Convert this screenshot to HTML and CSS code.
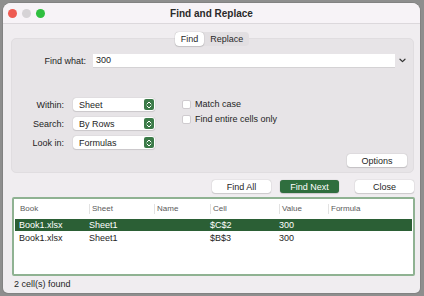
FILE: index.html
```html
<!DOCTYPE html>
<html lang="en">
<head>
    <meta charset="UTF-8">
    <meta name="viewport" content="width=device-width, initial-scale=1.0">
    <title>Find and Replace</title>
    <link rel="stylesheet" href="styles.css">
</head>
<body>
  <div class="window">
    <div class="titlebar">
      <div class="lights">
        <span class="light red"></span>
        <span class="light gray"></span>
        <span class="light green"></span>
      </div>
      <div class="title">Find and Replace</div>
      <div></div>
    </div>

    <div class="content">
      <div class="tabs">
        <div class="tab active">Find</div>
        <div class="tab">Replace</div>
      </div>

      <div class="panel">
        <div class="find-row">
          <label class="find-label">Find what:</label>
          <div class="find-input">300</div>
          <svg class="chevron" width="7" height="5" viewBox="0 0 7 5">
            <path d="M1 1.2 L3.5 3.6 L6 1.2" fill="none" stroke="#333" stroke-width="1.2" stroke-linecap="round" stroke-linejoin="round"/>
          </svg>
        </div>

        <div class="options">
          <div class="selects">
            <div class="opt-row">
              <label class="opt-label">Within:</label>
              <div class="select"><span>Sheet</span><span class="stepper"><svg width="6" height="8" viewBox="0 0 6 8"><path d="M1 3 L3 1 L5 3 M1 5 L3 7 L5 5" fill="none" stroke="#fff" stroke-width="1" stroke-linecap="round" stroke-linejoin="round"/></svg></span></div>
            </div>
            <div class="opt-row">
              <label class="opt-label">Search:</label>
              <div class="select"><span>By Rows</span><span class="stepper"><svg width="6" height="8" viewBox="0 0 6 8"><path d="M1 3 L3 1 L5 3 M1 5 L3 7 L5 5" fill="none" stroke="#fff" stroke-width="1" stroke-linecap="round" stroke-linejoin="round"/></svg></span></div>
            </div>
            <div class="opt-row">
              <label class="opt-label">Look in:</label>
              <div class="select"><span>Formulas</span><span class="stepper"><svg width="6" height="8" viewBox="0 0 6 8"><path d="M1 3 L3 1 L5 3 M1 5 L3 7 L5 5" fill="none" stroke="#fff" stroke-width="1" stroke-linecap="round" stroke-linejoin="round"/></svg></span></div>
            </div>
          </div>
          <div class="checks">
            <div class="check-row"><span class="checkbox"></span>Match case</div>
            <div class="check-row"><span class="checkbox"></span>Find entire cells only</div>
          </div>
        </div>

        <div class="panel-foot">
          <button class="btn">Options</button>
        </div>
      </div>

      <div class="actions">
        <button class="btn wide">Find All</button>
        <button class="btn wide primary">Find Next</button>
        <button class="btn wide close">Close</button>
      </div>

      <div class="results">
        <div class="grid head">
          <div class="cell">Book</div>
          <div class="cell">Sheet</div>
          <div class="cell">Name</div>
          <div class="cell">Cell</div>
          <div class="cell">Value</div>
          <div class="cell">Formula</div>
        </div>
        <div class="grid row selected">
          <div class="cell">Book1.xlsx</div>
          <div class="cell">Sheet1</div>
          <div class="cell"></div>
          <div class="cell">$C$2</div>
          <div class="cell">300</div>
          <div class="cell"></div>
        </div>
        <div class="grid row">
          <div class="cell">Book1.xlsx</div>
          <div class="cell">Sheet1</div>
          <div class="cell"></div>
          <div class="cell">$B$3</div>
          <div class="cell">300</div>
          <div class="cell"></div>
        </div>
      </div>

      <div class="status">2 cell(s) found</div>
    </div>
  </div>
</body>
</html>
```

FILE: styles.css
```css
* {
    box-sizing: border-box;
    margin: 0;
    padding: 0;
}

body {
    width: 424px;
    height: 296px;
    background: #8e8e8e;
    font-family: 'Liberation Sans', Arial, sans-serif;
    font-size: 9px;
    color: #1e1e1e;
    padding: 3px 4px 3px 3px;
}

.window {
    width: 417px;
    height: 290px;
    background: #f0edf0;
    border-radius: 8px 8px 5px 5px;
    overflow: hidden;
    box-shadow: 0 0 0 1px rgba(0,0,0,0.08);
}

.titlebar {
    height: 21px;
    background: #f7f3f7;
    border-bottom: 1px solid #dcd8dc;
    display: grid;
    grid-template-columns: 1fr auto 1fr;
    align-items: center;
}

.lights {
    display: flex;
    gap: 5px;
    padding-left: 5px;
}

.light {
    width: 9px;
    height: 9px;
    border-radius: 50%;
}

.red { background: #ee5a52; }
.gray { background: #d6d3d6; }
.green { background: #2fbf3f; }

.title {
    font-size: 10px;
    font-weight: bold;
    color: #2a2a2a;
}

.content {
    padding: 0 5px 0 6px;
}

/* segmented control sits on top of the panel edge */
.tabs {
    position: relative;
    z-index: 1;
    display: flex;
    width: fit-content;
    margin: 8px auto 0;
    background: #e2dfe2;
    border-radius: 4px;
    height: 14px;
}

.tab {
    display: flex;
    align-items: center;
    padding: 0 6px;
    color: #2a2a2a;
    border-radius: 4px;
}

.tab.active {
    background: #fff;
    padding: 0 6px;
    box-shadow: 0 0 1px rgba(0,0,0,0.35), 0 1px 1px rgba(0,0,0,0.12);
}

.panel {
    margin: -8px 1px 0 2px;
    background: #e7e4e7;
    border: 1px solid #e0dde0;
    border-radius: 5px;
    padding: 15px 6px 5px 0;
}

.find-row {
    display: flex;
    align-items: center;
}

.find-label {
    width: 74px;
    text-align: right;
}

.find-input {
    width: 302px;
    height: 13px;
    margin-left: 7px;
    background: #fff;
    padding: 0 3px;
    line-height: 13px;
    box-shadow: 0 1px 0 rgba(0,0,0,0.08);
}

.chevron {
    margin-left: 4px;
}

.options {
    display: flex;
    margin-top: 31px;
}

.selects {
    display: flex;
    flex-direction: column;
    gap: 6px;
}

.opt-row {
    display: flex;
    align-items: center;
}

.opt-label {
    width: 52px;
    text-align: right;
}

.select {
    width: 82px;
    height: 13px;
    margin-left: 9px;
    background: #fff;
    border-radius: 3px;
    box-shadow: 0 0 1px rgba(0,0,0,0.3), 0 1px 1px rgba(0,0,0,0.1);
    display: flex;
    align-items: center;
    justify-content: space-between;
    padding: 0 1px 0 6px;
}

.stepper {
    width: 10px;
    height: 11px;
    background: #3b7a48;
    border-radius: 2px;
    display: flex;
    align-items: center;
    justify-content: center;
}

.checks {
    display: flex;
    flex-direction: column;
    gap: 5px;
    margin-left: 27px;
    padding-top: 1px;
}

.check-row {
    display: flex;
    align-items: center;
    height: 10px;
}

.checkbox {
    width: 9px;
    height: 9px;
    background: #fff;
    border: 1px solid #cfcbcf;
    border-radius: 2px;
    margin-right: 4px;
}

.panel-foot {
    display: flex;
    justify-content: flex-end;
    margin-top: 5px;
}

.btn {
    font-family: inherit;
    font-size: 9px;
    color: #1e1e1e;
    background: #fff;
    border: none;
    border-radius: 3px;
    height: 13px;
    width: 60px;
    box-shadow: 0 0 1px rgba(0,0,0,0.35), 0 1px 1px rgba(0,0,0,0.12);
}

.actions {
    display: flex;
    justify-content: flex-end;
    gap: 9px;
    margin: 7px 1px 0 0;
}

.btn.wide {
    width: 59px;
}

.btn.primary {
    background: #2f6e3e;
    color: #fff;
}

.btn.close {
    margin-left: 7px;
}

.results {
    margin: 4px 0 0 3px;
    height: 79px;
    background: #fff;
    border: 2px solid #8fb292;
    border-radius: 2px;
    padding: 0 1px;
}

.grid {
    display: grid;
    grid-template-columns: 74px 65px 56px 69px 49px 1fr;
}

.head {
    height: 20px;
    align-items: center;
    font-size: 8px;
    color: #5a5a5a;
}

.head .cell {
    border-left: 1px solid #e2e2e2;
    padding-left: 2px;
    line-height: 10px;
}

.head .cell:first-child {
    border-left: none;
    padding-left: 5px;
}

.row {
    height: 12px;
    line-height: 12px;
    margin-bottom: 1px;
}

.row .cell:first-child {
    padding-left: 4px;
}

.selected {
    background: #2b5f35;
    color: #fff;
}

.status {
    padding: 3px 0 0 5px;
    line-height: 11px;
}
```
